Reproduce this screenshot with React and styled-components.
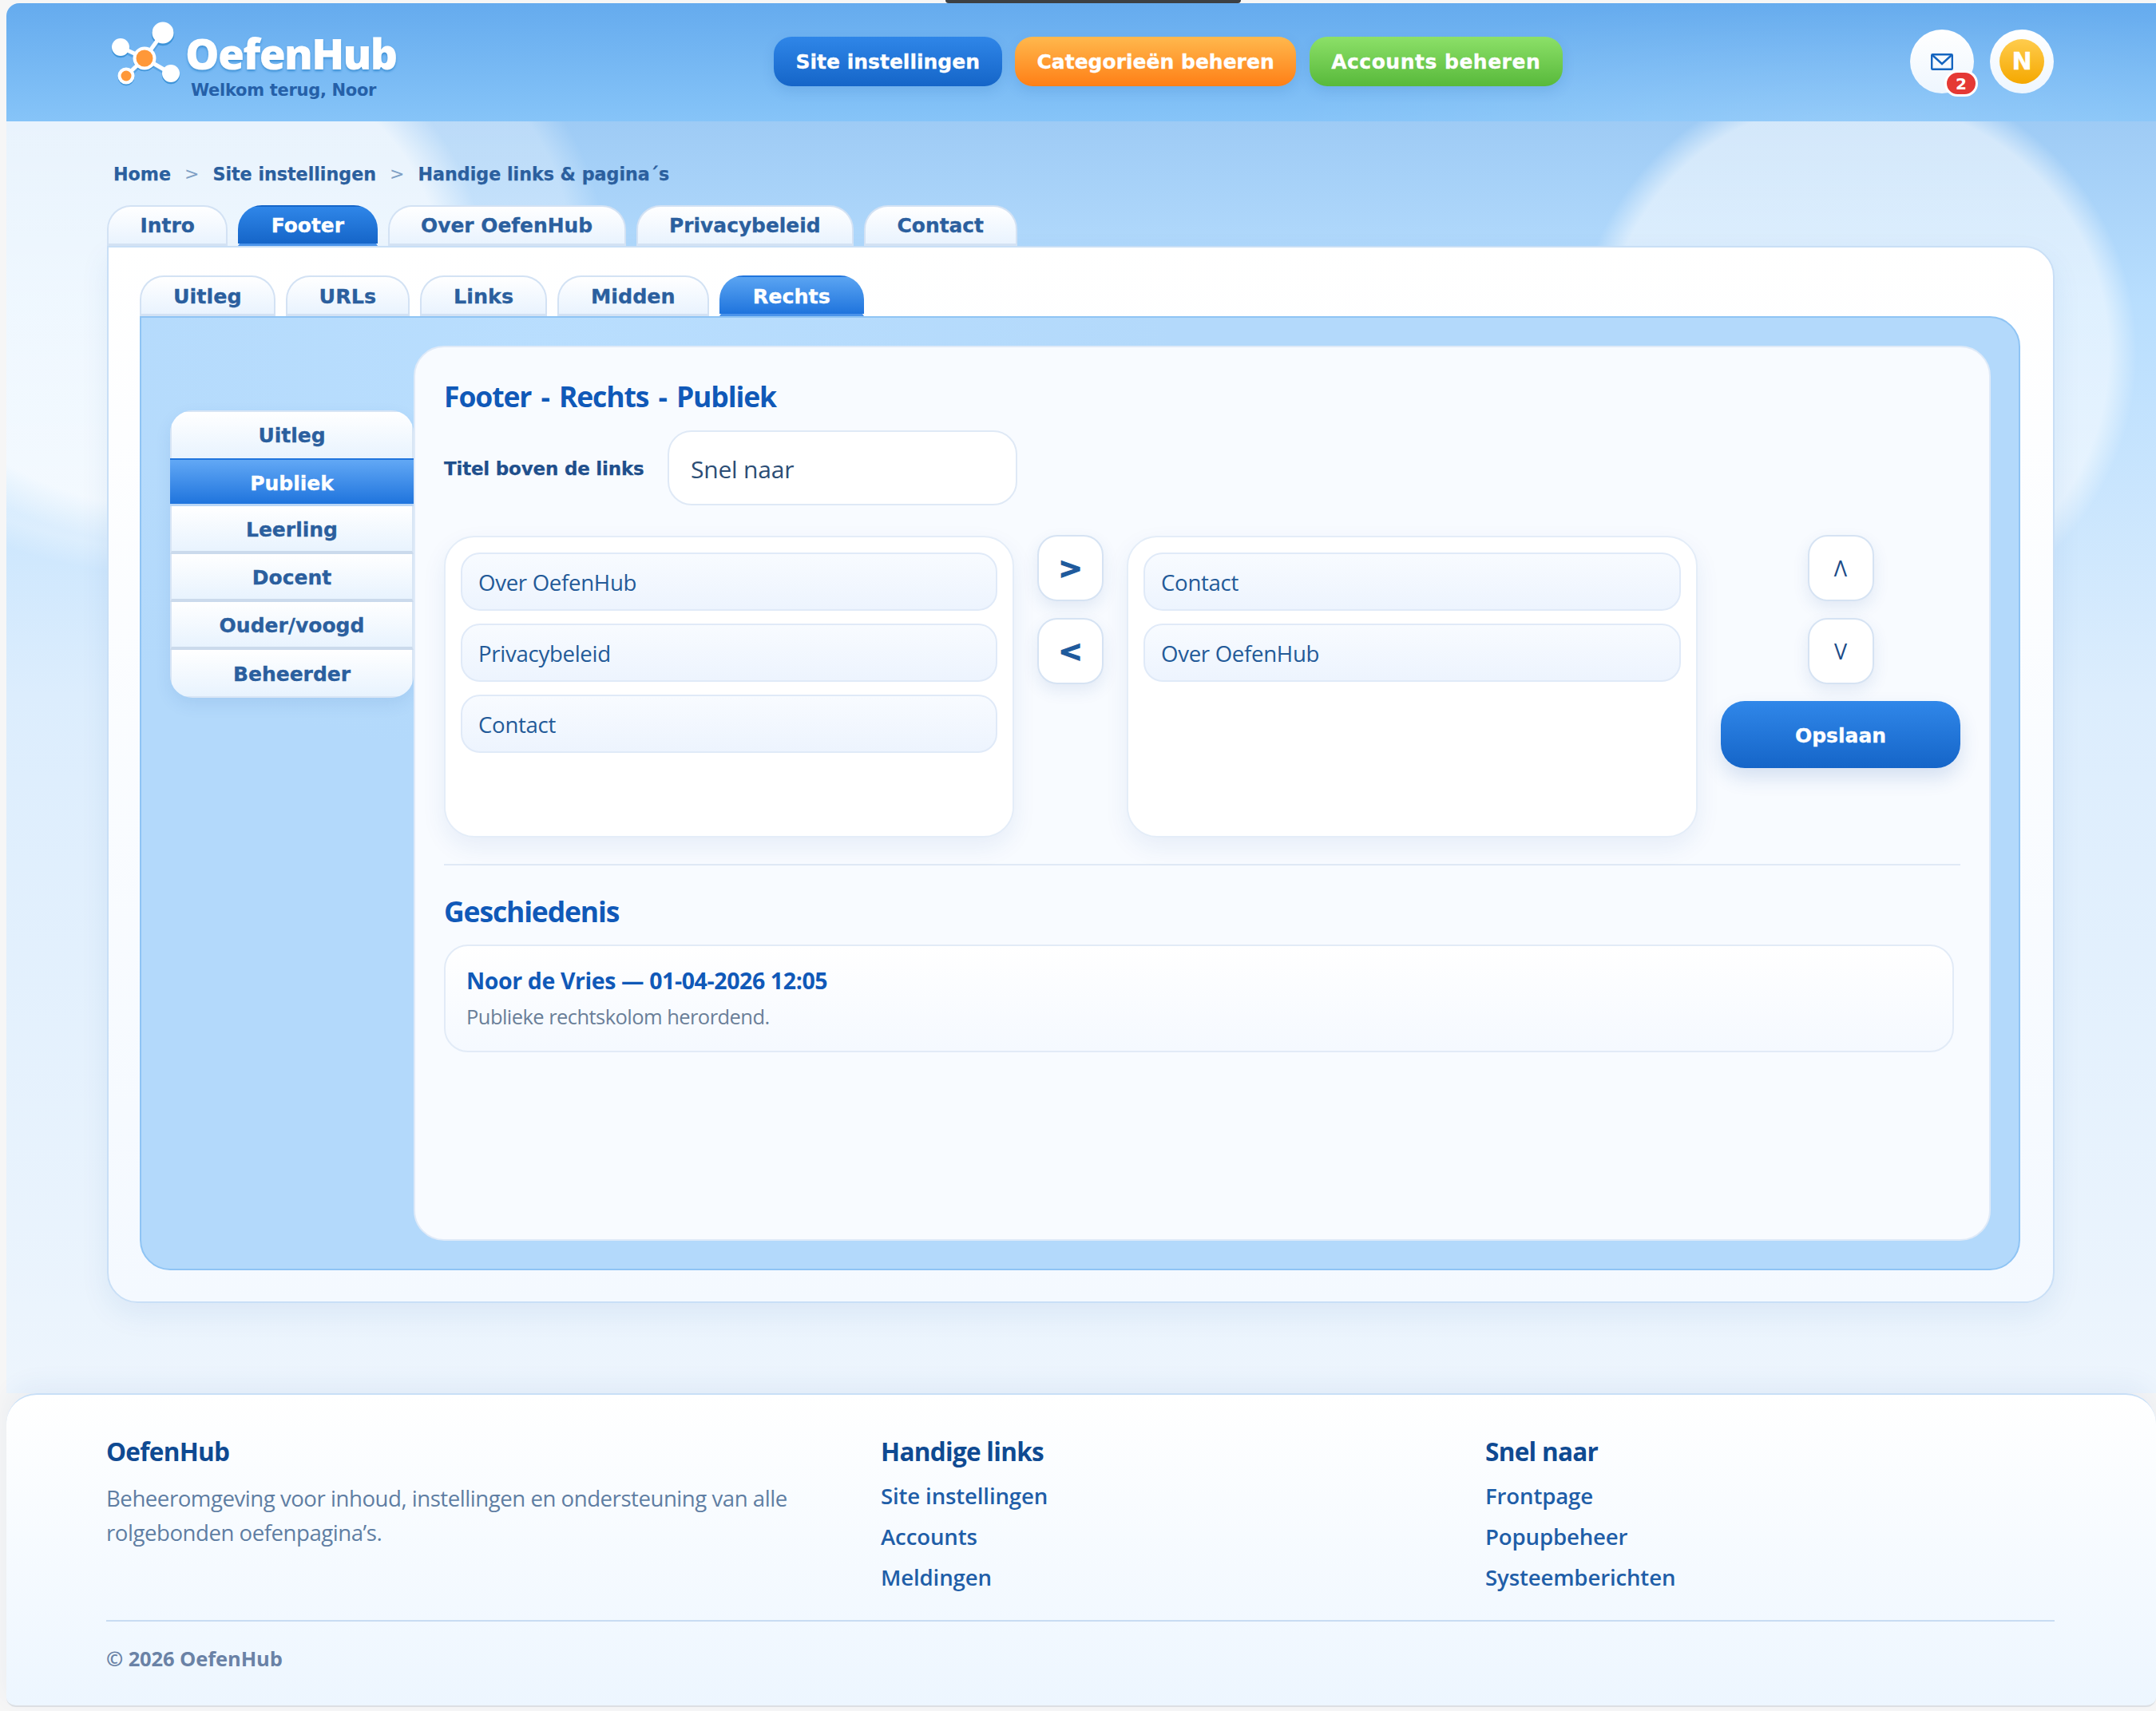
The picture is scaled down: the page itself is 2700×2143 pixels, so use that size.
import React from "react";
import styled, { createGlobalStyle } from "styled-components";

const Global = createGlobalStyle`
  html, body { margin: 0; padding: 0; background: #f6f6f6; }
  body { padding: 4px 0 5px 8px; width: 2700px; box-sizing: border-box; font-family: "Open Sans", sans-serif; }
  * { box-sizing: border-box; }
`;

const heavy = `"DejaVu Sans", Verdana, sans-serif`;
const soft = `"Open Sans", "Noto Sans", sans-serif`;

const Notch = styled.div`
  position: absolute; top: 0; left: 1184px; width: 370px; height: 4px;
  background: #3c4043; border-radius: 0 0 8px 8px;
`;
const Page = styled.div`display: flex; flex-direction: column;`;
const Header = styled.header`
  height: 148px; display: grid; grid-template-columns: 829px auto 1fr; align-items: center;
  padding: 0 128px 0 132px; border-radius: 16px 0 0 0;
  background: radial-gradient(ellipse 700px 160px at 2300px 150px, rgba(255,255,255,.12), transparent 100%),
    linear-gradient(180deg, #65abee 0%, #86c4f8 100%);
`;
const Logo = styled.div`display: flex; gap: 3px; align-items: flex-start; margin: -9px 0 0 -6px;`;
const LogoMark = styled.svg`width: 95px; height: 85px; flex: none; margin-top: 2px;`;
const LogoText = styled.div`display: flex; flex-direction: column; padding-top: 18px;`;
const LogoName = styled.div`
  font: 800 53.5px/54px ${soft}; color: #fff; letter-spacing: -1.7px;
  text-shadow: 0 2px 3px #3b8fd4;
`;
const Welcome = styled.div`font: 700 21px/26px ${heavy}; color: #2560a8; margin: 6px 0 0 7px; letter-spacing: -.3px;`;
const Nav = styled.nav`display: flex; gap: 16.5px; margin-top: -2px;`;
const NavBtn = styled.a`
  height: 62px; padding: 0 27.5px; border-radius: 22px; display: flex; align-items: center;
  font: 700 25px/1 ${heavy}; color: #fff; white-space: nowrap; letter-spacing: ${p => p.$ls || 0}px;
  -webkit-text-stroke: .3px #fff;
  background: linear-gradient(180deg, ${p => p.$from}, ${p => p.$to});
  box-shadow: 0 6px 16px rgba(30,90,170,.14);
`;
const Actions = styled.div`justify-self: end; display: flex; gap: 20px; margin-top: -2px;`;
const RoundBtn = styled.div`
  position: relative; width: 80px; height: 80px; border-radius: 50%; display: flex; align-items: center; justify-content: center;
  background: linear-gradient(180deg, #fff, #eef6fe);
`;
const Badge = styled.span`
  position: absolute; left: 43px; top: 51px; width: 42px; height: 33px; border-radius: 17px;
  background: #e53935; border: 3px solid #fff; color: #fff; display: flex; align-items: center; justify-content: center;
  font: 700 20px/1 ${heavy};
`;
const Avatar = styled.div`
  width: 56px; height: 56px; border-radius: 50%; display: flex; align-items: center; justify-content: center;
  background: linear-gradient(180deg, #ffcc4d, #f5a800); color: #fff; font: 700 30px/1 ${heavy};
  -webkit-text-stroke: .4px #fff;
`;
const Main = styled.main`
  padding: 52px 127px 113px 126px;
  background:
    radial-gradient(circle 352px at 2316px 290px, rgba(255,255,255,.55) 0 90%, rgba(255,255,255,0) 100%),
    radial-gradient(ellipse 400px 340px at 200px 190px, rgba(255,255,255,.68) 0 86%, rgba(255,255,255,0) 100%),
    radial-gradient(ellipse 530px 400px at 220px 170px, rgba(255,255,255,.3) 0 92%, rgba(255,255,255,0) 100%),
    linear-gradient(180deg, #9ecbf5 0, #b8defe 14%, #dcedfd 45%, #edf5fd 100%);
`;
const Crumbs = styled.div`display: flex; align-items: center; gap: 17px; height: 28px; margin: 0 0 25px 8px;`;
const Crumb = styled.a`font: 700 22.2px/28px ${heavy}; color: #2b5f9e; -webkit-text-stroke: .25px #2b5f9e;`;
const CrumbSep = styled.span`font: 400 22px/28px ${heavy}; color: #7e9fc4;`;
const TabRow = styled.div`display: flex; gap: 13px; height: 51px;`;
const Tab = styled.a`
  height: 51px; padding: 3px ${p => p.$pad}px 0; display: flex; align-items: center; white-space: nowrap;
  border-radius: 30px 30px 0 0; font: 700 ${p => p.$size}px/1 ${heavy};
  -webkit-text-stroke: .3px currentColor;
  color: ${p => (p.$active ? "#fff" : "#2b5f9e")};
  background: ${p => (p.$active ? `linear-gradient(180deg, ${p.$from}, ${p.$to})` : "linear-gradient(180deg, #fff, #e9f3fe)")};
  border: 2px solid ${p => (p.$active ? "transparent" : "#d3e2f4")};
  border-bottom: 3px solid ${p => (p.$active ? "#4a93ea" : "#d3e2f4")};
`;
const Card = styled.section`
  width: 2439px; height: 1324px; padding: 35px 41px 39px 39px; border: 2px solid #c9dff6;
  border-radius: 0 38px 38px 38px; background: linear-gradient(180deg, #fff 0%, #f4f9ff 100%);
  box-shadow: 0 14px 36px rgba(30,90,170,.08);
`;
const Panel = styled.div`
  height: 1195px; display: flex; padding: 35px 35px 35px 36px;
  border: 2px solid #8fc4f4; border-radius: 0 38px 38px 38px;
  background: radial-gradient(ellipse 800px 500px at 500px 50px, #b9defe, transparent), #b3d9fb;
`;
const Side = styled.div`
  flex: none; width: 305px; height: 360px; margin-top: 81px; display: flex; flex-direction: column;
  border-radius: 28px; overflow: hidden; box-shadow: 0 8px 20px rgba(30,90,170,.10);
`;
const SideItem = styled.a`
  height: 60px; padding-top: 3px; display: flex; align-items: center; justify-content: center; font: 700 25px/1 ${heavy};
  -webkit-text-stroke: .3px currentColor;
  color: ${p => (p.$active ? "#fff" : "#2b5f9e")};
  background: ${p => (p.$active ? "linear-gradient(180deg, #62a8f5, #1f74dd)" : "linear-gradient(180deg, #fff, #e8f3fe)")};
  border: 2px solid ${p => (p.$active ? "#1f74dd" : "#d8e5f5")};
  border-width: ${p => (p.$active ? "2px 0 3px 0" : "0 2px 4px 2px")};
  border-bottom-color: ${p => (p.$active ? "#b9d6f6" : "#cbdaec")};
  &:first-child { border-top-width: 2px; border-bottom-width: 0; padding-top: 1px; }
  &:last-child { border-bottom-width: 2px; border-bottom-color: #d8e5f5; }
`;
const Content = styled.div`
  flex: 1; padding: 38px 36px 0; border: 2px solid #dfeaf8; border-radius: 38px; background: #f8fbff;
`;
const Title = styled.h2`margin: 0; font: 700 35.5px/46px ${soft}; color: #1059b8; letter-spacing: -1.1px; word-spacing: 4px;`;
const FieldRow = styled.div`display: flex; align-items: center; gap: 30px; margin-top: 20px;`;
const FieldLabel = styled.label`font: 700 23px/1 ${heavy}; padding-top: 2px; color: #1f4f8c; letter-spacing: -.2px; width: 250px; white-space: nowrap; -webkit-text-stroke: .25px currentColor;`;
const Input = styled.div`
  width: 438px; height: 94px; display: flex; align-items: center; padding: 3px 27px 0; border: 2px solid #dfe9f6; border-radius: 30px;
  background: #fff; font: 400 30px/1 ${soft}; color: #2b4d75; letter-spacing: -.2px;
`;
const Transfer = styled.div`display: grid; grid-template-columns: 714px 83px 715px 300px; gap: 29px; margin-top: 38px; align-items: start;`;
const ListBox = styled.div`
  height: 378px; padding: 19px; display: flex; flex-direction: column; gap: 16px; background: #fff;
  border: 2px solid #e4edf8; border-radius: 38px; box-shadow: 0 12px 30px rgba(30,80,160,.08);
`;
const ListItem = styled.div`
  height: 73px; padding: 2px 20px 0; display: flex; align-items: center; border: 2px solid #e0eaf8; border-radius: 24px;
  background: linear-gradient(180deg, #f8fbff, #edf4fe); font: 400 27.6px/1 ${soft}; color: #235a98; letter-spacing: -.3px;
`;
const BtnColumn = styled.div`display: flex; flex-direction: column; align-items: center; gap: 21px; margin-top: -1px;`;
const MoveBtn = styled.button`
  width: 83px; height: 83px; padding: 0; border: 2px solid #d6e3f3; border-radius: 25px; background: #fff;
  box-shadow: 0 8px 20px rgba(30,80,160,.1); color: ${p => (p.$thin ? "#1c4c88" : "#1f5a9c")};
  font: ${p => (p.$thin ? `400 27px/1 ${soft}` : `700 36px/1 ${heavy}`)};
  -webkit-text-stroke: ${p => (p.$thin ? "0" : "1.4px currentColor")};
`;
const Save = styled.button`
  width: 300px; height: 84px; padding: 3px 0 0; border: 0; border-radius: 30px; color: #fff; font: 700 25px/1 ${heavy};
  -webkit-text-stroke: .3px #fff;
  background: linear-gradient(180deg, #3087e9, #1565c8); box-shadow: 0 12px 24px rgba(30,90,170,.16);
`;
const Rule = styled.div`height: 2px; margin-top: 33px; background: #e0e9f6;`;
const SubTitle = styled.h3`margin: 34px 0 0; font: 700 35.5px/46px ${soft}; color: #1059b8; letter-spacing: -1.15px;`;
const History = styled.div`
  width: 1891px; height: 135px; margin-top: 19px; padding: 24px 26px; border: 2px solid #e2ebf7; border-radius: 30px;
  background: linear-gradient(180deg, #fff, #f5f9ff);
`;
const HistoryName = styled.div`font: 700 28.5px/38px ${soft}; color: #1059b8; letter-spacing: -.4px;`;
const HistoryText = styled.div`margin-top: 10px; font: 400 25.5px/32px ${soft}; color: #6a7f99; letter-spacing: -.55px;`;
const Footer = styled.footer`
  height: 393px; padding: 49px 127px 0 125px; border-top: 2px solid #c8dff7; border-bottom: 2px solid #dcdfe3;
  border-radius: 38px 38px 12px 12px; background: linear-gradient(180deg, #fff, #edf6ff);
  box-shadow: 0 -12px 30px rgba(30,90,170,.06);
`;
const FootCols = styled.div`display: grid; grid-template-columns: 970px 757px 1fr; height: 235px; border-bottom: 2px solid #c8dcf2;`;
const FootHead = styled.h4`margin: 0; font: 700 31.5px/44px ${soft}; color: #0f4a92; letter-spacing: -.7px;`;
const FootText = styled.p`margin: 15px 0 0; font: 400 27.6px/43px ${soft}; color: #5f7ea3; letter-spacing: -.47px; width: 880px;`;
const FootLink = styled.a`display: block; font: 600 27.6px/51px ${soft}; color: #1f5ea8; letter-spacing: -.15px; &:first-of-type { margin-top: 8px; }`;
const Copy = styled.div`margin-top: 26px; font: 700 25.5px/40px ${soft}; color: #6a82a6; letter-spacing: -.1px;`;

const mainTabs = ["Intro", "Footer", "Over OefenHub", "Privacybeleid", "Contact"];
const subTabs = ["Uitleg", "URLs", "Links", "Midden", "Rechts"];
const roles = ["Uitleg", "Publiek", "Leerling", "Docent", "Ouder/voogd", "Beheerder"];

export default function App() {
  return (
    <>
      <Global />
      <Notch />
      <Page>
        <Header>
          <Logo>
            <LogoMark viewBox="135 25 95 85">
              <g stroke="#3d93d8" strokeOpacity=".55" transform="translate(0 2)" fill="#3d93d8">
                <path d="M205 42L182 74M152 60L182 74M215 93L182 74M159 96L182 74" strokeWidth="7" fill="none" />
                <circle cx="205" cy="42" r="14" /><circle cx="152" cy="60" r="11" /><circle cx="215" cy="93" r="11" />
                <circle cx="159" cy="96" r="10" /><circle cx="182" cy="74" r="14" />
              </g>
              <path d="M205 42L182 74M152 60L182 74M215 93L182 74M159 96L182 74" stroke="#fff" strokeWidth="5" fill="none" />
              <circle cx="205" cy="42" r="13.5" fill="#fff" />
              <circle cx="152" cy="60" r="11" fill="#fff" />
              <circle cx="215" cy="93" r="11" fill="#fff" />
              <circle cx="159" cy="96" r="10.5" fill="#fff" />
              <circle cx="182" cy="74" r="14.5" fill="#fff" />
              <circle cx="159" cy="96" r="6.5" fill="#ff9838" />
              <circle cx="182" cy="74" r="10.5" fill="#ff9838" />
            </LogoMark>
            <LogoText>
              <LogoName>OefenHub</LogoName>
              <Welcome>Welkom terug, Noor</Welcome>
            </LogoText>
          </Logo>
          <Nav>
            <NavBtn $from="#2f86e8" $to="#1565c8">Site instellingen</NavBtn>
            <NavBtn $from="#ffb84d" $to="#ff7f16">Categorieën beheren</NavBtn>
            <NavBtn $from="#8ce068" $to="#58b93b" $ls={0.5}>Accounts beheren</NavBtn>
          </Nav>
          <Actions>
            <RoundBtn>
              <svg width="28" height="21" viewBox="0 0 28 21" fill="none" stroke="#1565c0" strokeWidth="2.4">
                <rect x="1.2" y="1.2" width="25.6" height="18.6" rx="1" />
                <path d="M2 2L14 13L26 2" />
              </svg>
              <Badge>2</Badge>
            </RoundBtn>
            <RoundBtn><Avatar>N</Avatar></RoundBtn>
          </Actions>
        </Header>
        <Main>
          <Crumbs>
            <Crumb>Home</Crumb><CrumbSep>&gt;</CrumbSep>
            <Crumb>Site instellingen</Crumb><CrumbSep>&gt;</CrumbSep>
            <Crumb>Handige links &amp; pagina´s</Crumb>
          </Crumbs>
          <TabRow>
            {mainTabs.map(t => (
              <Tab key={t} $pad={39.5} $size={24.9} $active={t === "Footer"} $from="#2f86e8" $to="#1565c8">{t}</Tab>
            ))}
          </TabRow>
          <Card>
            <TabRow>
              {subTabs.map(t => (
                <Tab key={t} $pad={40} $size={25.4} $active={t === "Rechts"} $from="#5aa4f2" $to="#1f74dd">{t}</Tab>
              ))}
            </TabRow>
            <Panel>
              <Side>
                {roles.map(r => <SideItem key={r} $active={r === "Publiek"}>{r}</SideItem>)}
              </Side>
              <Content>
                <Title>Footer - Rechts - Publiek</Title>
                <FieldRow>
                  <FieldLabel>Titel boven de links</FieldLabel>
                  <Input>Snel naar</Input>
                </FieldRow>
                <Transfer>
                  <ListBox>
                    <ListItem>Over OefenHub</ListItem>
                    <ListItem>Privacybeleid</ListItem>
                    <ListItem>Contact</ListItem>
                  </ListBox>
                  <BtnColumn>
                    <MoveBtn>&gt;</MoveBtn>
                    <MoveBtn>&lt;</MoveBtn>
                  </BtnColumn>
                  <ListBox>
                    <ListItem>Contact</ListItem>
                    <ListItem>Over OefenHub</ListItem>
                  </ListBox>
                  <BtnColumn>
                    <MoveBtn $thin>Λ</MoveBtn>
                    <MoveBtn $thin>V</MoveBtn>
                    <Save>Opslaan</Save>
                  </BtnColumn>
                </Transfer>
                <Rule />
                <SubTitle>Geschiedenis</SubTitle>
                <History>
                  <HistoryName>Noor de Vries — 01-04-2026 12:05</HistoryName>
                  <HistoryText>Publieke rechtskolom herordend.</HistoryText>
                </History>
              </Content>
            </Panel>
          </Card>
        </Main>
        <Footer>
          <FootCols>
            <div>
              <FootHead>OefenHub</FootHead>
              <FootText>Beheeromgeving voor inhoud, instellingen en ondersteuning van alle rolgebonden oefenpagina’s.</FootText>
            </div>
            <div>
              <FootHead>Handige links</FootHead>
              <FootLink>Site instellingen</FootLink>
              <FootLink>Accounts</FootLink>
              <FootLink>Meldingen</FootLink>
            </div>
            <div>
              <FootHead>Snel naar</FootHead>
              <FootLink>Frontpage</FootLink>
              <FootLink>Popupbeheer</FootLink>
              <FootLink>Systeemberichten</FootLink>
            </div>
          </FootCols>
          <Copy>© 2026 OefenHub</Copy>
        </Footer>
      </Page>
    </>
  );
}
